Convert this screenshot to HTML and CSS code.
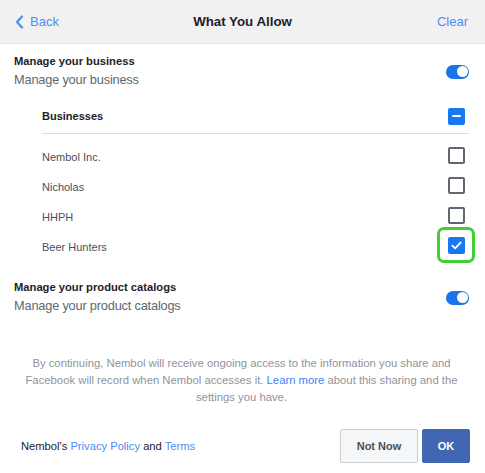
FILE: index.html
```html
<!DOCTYPE html>
<html>
<head>
<meta charset="utf-8">
<link rel="stylesheet" href="styles.css">
</head>
<body>
<div class="dialog">
  <header class="topbar">
    <a class="nav-link back"><svg class="chev" width="9" height="14" viewBox="0 0 9 14"><path d="M7 1.5 L2 7 L7 12.5" fill="none" stroke="currentColor" stroke-width="2.2" stroke-linecap="round" stroke-linejoin="round"/></svg>Back</a>
    <div class="title">What You Allow</div>
    <a class="nav-link clear">Clear</a>
  </header>

  <main class="content">
    <section class="perm">
      <div class="perm-text">
        <div class="perm-title">Manage your business</div>
        <div class="perm-sub">Manage your business</div>
      </div>
      <span class="toggle"><span class="knob"></span></span>
    </section>

    <div class="sublist">
      <div class="sub-head">
        <span>Businesses</span>
        <span class="box box-mixed"><span class="dash"></span></span>
      </div>
      <div class="item"><span>Nembol Inc.</span><span class="box"></span></div>
      <div class="item"><span>Nicholas</span><span class="box"></span></div>
      <div class="item"><span>HHPH</span><span class="box"></span></div>
      <div class="item"><span>Beer Hunters</span>
        <span class="highlight"><span class="box box-checked"><svg width="11" height="9" viewBox="0 0 11 9"><path d="M1.3 4.6 L4.1 7.3 L9.7 1.5" fill="none" stroke="#fff" stroke-width="1.8" stroke-linecap="round" stroke-linejoin="round"/></svg></span></span>
      </div>
    </div>

    <section class="perm perm-second">
      <div class="perm-text">
        <div class="perm-title">Manage your product catalogs</div>
        <div class="perm-sub">Manage your product catalogs</div>
      </div>
      <span class="toggle"><span class="knob"></span></span>
    </section>

    <p class="notice">By continuing, Nembol will receive ongoing access to the information you share and Facebook will record when Nembol accesses it. <a class="link-dark">Learn more</a> about this sharing and the settings you have.</p>
  </main>

  <footer class="footer">
    <div class="legal">Nembol's <a class="link">Privacy Policy</a> and <a class="link">Terms</a></div>
    <div class="actions">
      <button class="btn btn-secondary">Not Now</button>
      <button class="btn btn-primary">OK</button>
    </div>
  </footer>
</div>
</body>
</html>
```

FILE: styles.css
```css
* { box-sizing: border-box; }
html, body { margin: 0; padding: 0; background: #fff; }
body {
  font-family: "Liberation Sans", Arial, Helvetica, sans-serif;
  color: #1d2129;
  width: 485px;
  height: 473px;
  overflow: hidden;
}
.dialog { display: flex; flex-direction: column; height: 473px; }

.topbar {
  height: 44px;
  background: #f1f1f1;
  border-bottom: 1px solid #e3e3e3;
  display: flex;
  align-items: center;
  justify-content: space-between;
  padding: 0 17px 0 15px;
  position: relative;
}
.nav-link { color: #4c8df6; font-size: 13px; display: flex; align-items: center; }
.back .chev { margin-right: 6px; }
.title {
  position: absolute;
  left: 0; right: 0;
  text-align: center;
  font-weight: bold;
  font-size: 13.3px;
  color: #1d2129;
  pointer-events: none;
}

.content { padding: 0 16px 0 14px; }

.perm {
  display: flex;
  align-items: center;
  justify-content: space-between;
  padding-top: 10px;
}
.perm-second { padding-top: 20px; }
.perm-title { font-size: 11.2px; font-weight: bold; line-height: 14px; color: #1d2129; }
.perm-sub { font-size: 12.8px; letter-spacing: -0.2px; line-height: 18px; margin-top: 3px; color: #606770; }

.toggle {
  width: 23px;
  height: 14px;
  border-radius: 7px;
  background: #1a73e8;
  position: relative;
}
.knob {
  position: absolute;
  right: 1.5px;
  top: 1.5px;
  width: 11px;
  height: 11px;
  border-radius: 50%;
  background: #fff;
}

.sublist { margin-left: 28px; margin-top: 10px; }
.sub-head {
  height: 35px;
  border-bottom: 1px solid #dadde1;
  display: flex;
  align-items: center;
  justify-content: space-between;
  font-size: 11px;
  font-weight: bold;
  padding-right: 4px;
  margin-bottom: 6px;
}
.item {
  height: 30px;
  display: flex;
  align-items: center;
  justify-content: space-between;
  font-size: 11px;
  color: #4b4f56;
  padding-right: 4px;
}
.item > span:first-child { padding-top: 3px; }

.box {
  width: 17px;
  height: 17px;
  border: 2px solid #606770;
  border-radius: 2px;
  display: inline-flex;
  align-items: center;
  justify-content: center;
  background: #fff;
}
.box-mixed { background: #1877f2; border-color: #1877f2; }
.dash { width: 9px; height: 2px; background: #fff; border-radius: 1px; }
.box-checked { background: #1877f2; border-color: #1877f2; }

.highlight {
  width: 38px;
  height: 36px;
  border: 3px solid #3fcf35;
  border-radius: 7px;
  display: inline-flex;
  align-items: center;
  justify-content: center;
  margin-right: -10px;
}

.notice {
  margin: 40px 2px 0 2px;
  padding: 0 4px;
  text-align: center;
  font-size: 11.3px;
  line-height: 17px;
  color: #90949c;
}
.link-dark { color: #4080ff; }
.link { color: #4c8df6; }

.footer {
  margin-top: auto;
  display: flex;
  align-items: center;
  justify-content: space-between;
  padding: 0 15px 10px 21px;
}
.legal { font-size: 11.2px; color: #1d2129; }
.actions { display: flex; gap: 4px; }
.btn {
  height: 34px;
  font-family: inherit;
  font-size: 11px;
  font-weight: bold;
  border-radius: 2px;
  padding: 0;
}
.btn-secondary {
  width: 78px;
  background: #f5f6f7;
  border: 1px solid #ccd0d5;
  color: #4b4f56;
}
.btn-primary {
  width: 48px;
  background: #4267b2;
  border: 1px solid #4267b2;
  color: #fff;
}
```
